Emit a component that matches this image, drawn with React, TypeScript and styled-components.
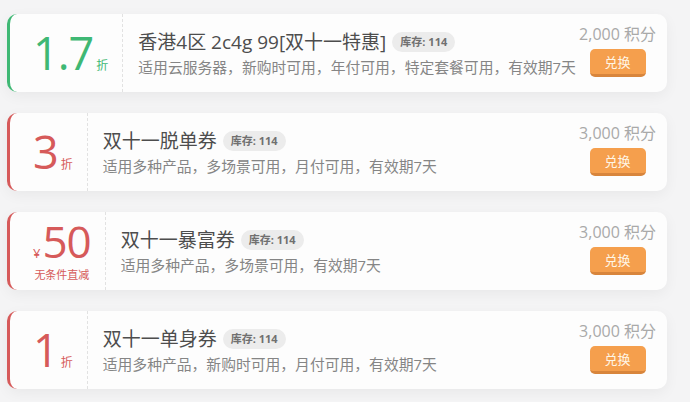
import React from 'react';
import styled, { createGlobalStyle } from 'styled-components';

const GlobalStyle = createGlobalStyle`
    html, body {
        margin: 0;
        padding: 0;
        background: #f4f4f5;
        font-family: 'Open Sans', 'Noto Sans CJK SC', sans-serif;
    }
`;

type Coupon = {
    value: string;
    unit?: string;
    prefix?: string;
    note?: string;
    color: string;
    title: string;
    desc: string;
    stock: number;
    points: string;
};

const coupons: Coupon[] = [
    {
        value: '1.7',
        unit: '折',
        color: '#3fb874',
        title: '香港4区 2c4g 99[双十一特惠]',
        desc: '适用云服务器，新购时可用，年付可用，特定套餐可用，有效期7天',
        stock: 114,
        points: '2,000',
    },
    {
        value: '3',
        unit: '折',
        color: '#d65a5a',
        title: '双十一脱单券',
        desc: '适用多种产品，多场景可用，月付可用，有效期7天',
        stock: 114,
        points: '3,000',
    },
    {
        value: '50',
        prefix: '¥',
        note: '无条件直减',
        color: '#d65a5a',
        title: '双十一暴富券',
        desc: '适用多种产品，多场景可用，有效期7天',
        stock: 114,
        points: '3,000',
    },
    {
        value: '1',
        unit: '折',
        color: '#d65a5a',
        title: '双十一单身券',
        desc: '适用多种产品，新购时可用，月付可用，有效期7天',
        stock: 114,
        points: '3,000',
    },
];

const List = styled.div`
    display: flex;
    flex-direction: column;
    gap: 21px;
    padding: 14px 23px 12px 7px;
`;

const Card = styled.div<{ $color: string }>`
    display: flex;
    height: 78px;
    box-sizing: border-box;
    background: #fdfdfd;
    border-left: 3px solid ${(p) => p.$color};
    border-radius: 10px;
    box-shadow: 0 4px 14px rgba(0, 0, 0, 0.05);
`;

const Amount = styled.div<{ $color: string }>`
    display: flex;
    flex-direction: column;
    justify-content: center;
    align-items: center;
    padding: 0 14px 0 23px;
    border-right: 1px dashed #e2e2e2;
    color: ${(p) => p.$color};
`;

const AmountRow = styled.div`
    display: flex;
    align-items: baseline;
`;

const Big = styled.span<{ $small?: boolean }>`
    font-size: ${(p) => (p.$small ? '44px' : '45px')};
    line-height: ${(p) => (p.$small ? '40px' : '54px')};
    letter-spacing: -1px;
    font-weight: 400;
`;

const Unit = styled.span`
    font-size: 12px;
    margin-left: 3px;
`;

const Prefix = styled.span`
    font-size: 13px;
    margin-right: 2px;
`;

const Note = styled.div`
    font-size: 11px;
    line-height: 14px;
    margin-top: 6px;
`;

const Info = styled.div`
    flex: 1;
    display: flex;
    flex-direction: column;
    justify-content: center;
    padding: 1px 0 0 15px;
    min-width: 0;
    white-space: nowrap;
`;

const TitleRow = styled.div`
    display: flex;
    align-items: center;
`;

const Title = styled.div`
    font-size: 19px;
    line-height: 26px;
    color: #4d4d4d;
`;

const Stock = styled.span`
    margin-left: 6px;
    padding: 0 8px;
    height: 20px;
    line-height: 20px;
    border-radius: 10px;
    background: #ececec;
    color: #707070;
    font-size: 11px;
    font-weight: 700;
`;

const Desc = styled.div`
    font-size: 14.8px;
    line-height: 22px;
    color: #858585;
    margin-top: 1px;
`;

const Side = styled.div`
    flex-shrink: 0;
    display: flex;
    flex-direction: column;
    align-items: center;
    justify-content: center;
    gap: 4px;
    padding: 0 11px 6px 4px;
`;

const Points = styled.div`
    font-size: 16px;
    line-height: 22px;
    color: #a9a9a9;
    white-space: nowrap;
`;

const Button = styled.button`
    width: 56px;
    height: 28px;
    border: none;
    border-bottom: 3px solid #d8853c;
    border-radius: 5px;
    background: #f59f4d;
    color: #fff6e6;
    font-family: inherit;
    font-size: 13px;
    padding: 0;
    cursor: pointer;
`;

const App: React.FC = () => (
    <>
        <GlobalStyle />
        <List>
            {coupons.map((c, i) => (
                <Card key={i} $color={c.color}>
                    <Amount $color={c.color}>
                        <AmountRow>
                            {c.prefix && <Prefix>{c.prefix}</Prefix>}
                            <Big $small={!!c.note}>{c.value}</Big>
                            {c.unit && <Unit>{c.unit}</Unit>}
                        </AmountRow>
                        {c.note && <Note>{c.note}</Note>}
                    </Amount>
                    <Info>
                        <TitleRow>
                            <Title>{c.title}</Title>
                            <Stock>库存: {c.stock}</Stock>
                        </TitleRow>
                        <Desc>{c.desc}</Desc>
                    </Info>
                    <Side>
                        <Points>{c.points} 积分</Points>
                        <Button>兑换</Button>
                    </Side>
                </Card>
            ))}
        </List>
    </>
);

export default App;
